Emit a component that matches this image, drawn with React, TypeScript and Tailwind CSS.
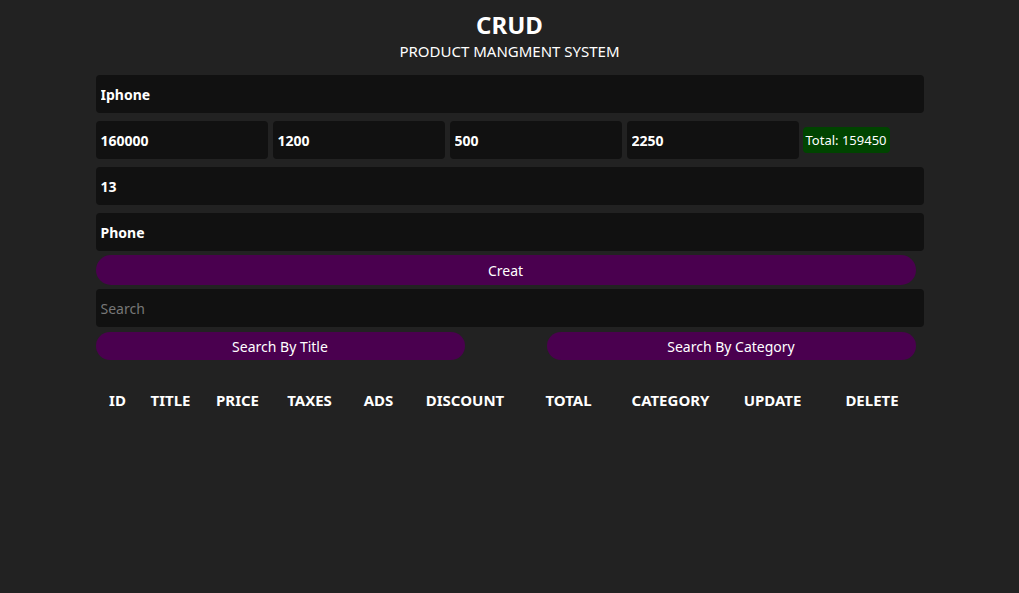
export default function App() {
  const heads = ["ID", "TITLE", "PRICE", "TAXES", "ADS", "DISCOUNT", "TOTAL", "CATEGORY", "UPDATE", "DELETE"];
  const inp = "h-[38px] rounded bg-[#111111] px-[5px] text-[14px] font-bold text-white outline-none font-['Liberation_Sans',Arial,sans-serif]";
  return (
    <div className="min-h-[593px] bg-[#222222] text-white">
      <div className="mx-auto w-[828px] pt-[10px]">
        <div className="text-center font-['Open_Sans',sans-serif]">
          <h1 className="text-[24px] font-bold leading-[30px]">CRUD</h1>
          <p className="text-[15px] leading-[22px]">PRODUCT MANGMENT SYSTEM</p>
        </div>
        <div className="mt-[13px] flex flex-col gap-[8px]">
          <input className={inp} defaultValue="Iphone" />
          <div className="flex items-center gap-[5px]">
            {["160000", "1200", "500", "2250"].map((v) => (
              <input key={v} className={`${inp} w-[172px]`} defaultValue={v} />
            ))}
            <span className="ml-[-1px] rounded bg-[#004400] px-[3px] py-[4px] text-[13px] leading-[18px] font-['Open_Sans',sans-serif]">Total: 159450</span>
          </div>
          <input className={inp} defaultValue="13" />
          <input className={inp} defaultValue="Phone" />
        </div>
        <button className="mt-[4px] h-[30px] w-[820px] rounded-full bg-[#4a004f] text-[14px] font-['Liberation_Sans',Arial,sans-serif]">Creat</button>
        <input className={`${inp} mt-[4px] w-full font-normal placeholder:text-[#777777]`} placeholder="Search" />
        <div className="mt-[5px] flex justify-between w-[820px]">
          <button className="h-[28px] w-[369px] rounded-full bg-[#4a004f] text-[14px] font-['Liberation_Sans',Arial,sans-serif]">Search By Title</button>
          <button className="h-[28px] w-[369px] rounded-full bg-[#4a004f] text-[14px] font-['Liberation_Sans',Arial,sans-serif]">Search By Category</button>
        </div>
        <div className="mt-[29px] grid grid-cols-[44px_62px_72px_72px_66px_107px_100px_104px_100px_99px] text-center text-[15px] font-bold font-['Open_Sans',sans-serif]">
          {heads.map((h) => (
            <div key={h}>{h}</div>
          ))}
        </div>
      </div>
    </div>
  );
}
